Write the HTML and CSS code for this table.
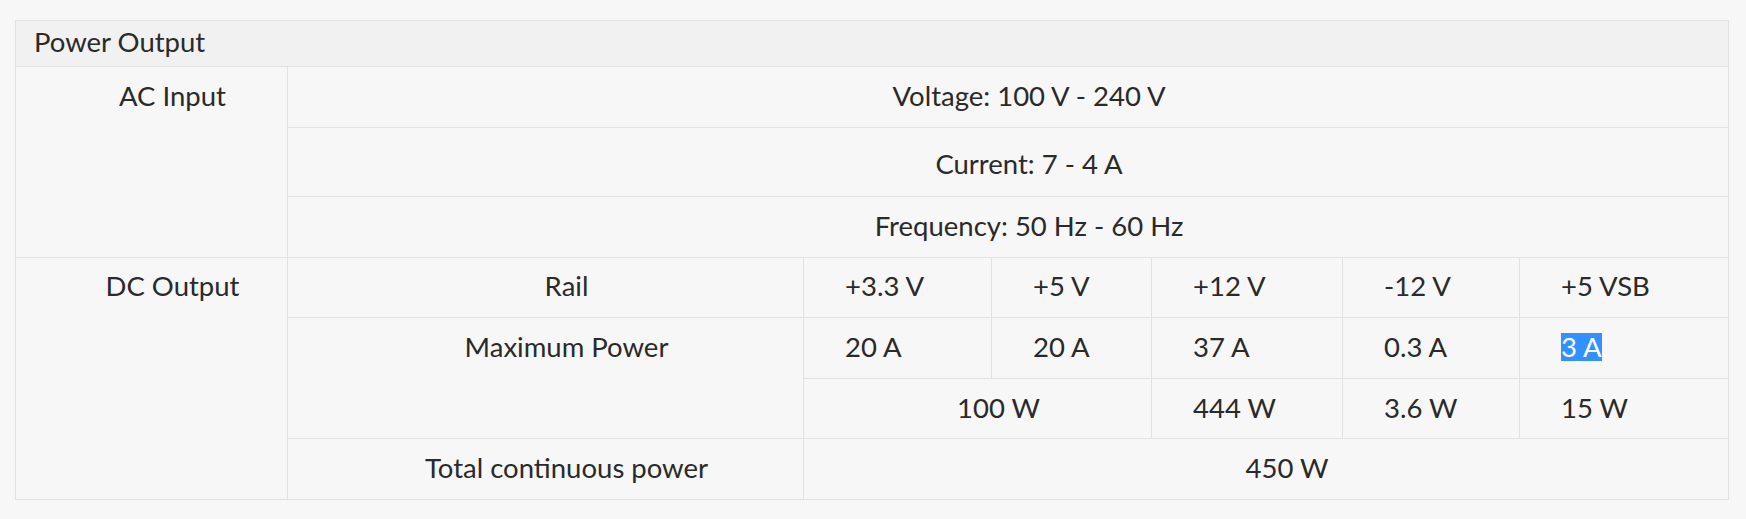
FILE: index.html
```html
<!DOCTYPE html>
<html lang="en">
<head>
<meta charset="utf-8">
<title>Power Output</title>
<link rel="stylesheet" href="styles.css">
</head>
<body>
<div class="page">
  <table class="spec">
    <colgroup>
      <col class="c-label">
      <col class="c-sub">
      <col class="c-33">
      <col class="c-5">
      <col class="c-12">
      <col class="c-m12">
      <col class="c-vsb">
    </colgroup>
    <thead>
      <tr class="head-row">
        <th colspan="7">Power Output</th>
      </tr>
    </thead>
    <tbody>
      <tr>
        <td rowspan="3" class="top">AC Input</td>
        <td colspan="6">Voltage: 100 V - 240 V</td>
      </tr>
      <tr class="current-row">
        <td colspan="6">Current: 7 - 4 A</td>
      </tr>
      <tr>
        <td colspan="6">Frequency: 50 Hz - 60 Hz</td>
      </tr>
      <tr class="rail-row">
        <td rowspan="4" class="top">DC Output</td>
        <td>Rail</td>
        <td class="val">+3.3 V</td>
        <td class="val">+5 V</td>
        <td class="val">+12 V</td>
        <td class="val">-12 V</td>
        <td class="val">+5 VSB</td>
      </tr>
      <tr>
        <td rowspan="2" class="top">Maximum Power</td>
        <td class="val">20 A</td>
        <td class="val">20 A</td>
        <td class="val">37 A</td>
        <td class="val">0.3 A</td>
        <td class="val"><span class="sel">3 A</span></td>
      </tr>
      <tr class="watt-row">
        <td colspan="2">100 W</td>
        <td class="val">444 W</td>
        <td class="val">3.6 W</td>
        <td class="val">15 W</td>
      </tr>
      <tr>
        <td>Total continuous power</td>
        <td colspan="5">450 W</td>
      </tr>
    </tbody>
  </table>
</div>
</body>
</html>
```
FILE: styles.css
```css
html, body {
  margin: 0;
  padding: 0;
  background: #f7f7f7;
}

body {
  font-family: "Lato", "Open Sans", sans-serif;
  font-size: 27.5px;
  color: #2a2a2a;
}

.page {
  padding: 20px 0 0 15px;
}

.spec {
  border-collapse: collapse;
  table-layout: fixed;
  width: 1713px;
  background: #f7f7f7;
}

.c-label { width: 272px; }
.c-sub { width: 516px; }
.c-33 { width: 188px; }
.c-5 { width: 160px; }
.c-12 { width: 191px; }
.c-m12 { width: 177px; }
.c-vsb { width: 209px; }

.spec th,
.spec td {
  border: 1px solid #e2e2e2;
  line-height: 32px;
  padding: 13px 0 15px 42px;
  text-align: center;
  vertical-align: middle;
  font-weight: normal;
}

.head-row th {
  background: #f1f1f1;
  text-align: left;
  padding: 5px 0 8px 18px;
}

.spec td.top {
  vertical-align: top;
}

.spec td.val {
  text-align: left;
  padding-left: 41px;
}

.current-row td {
  padding-top: 20px;
  padding-bottom: 16px;
}

.rail-row td {
  padding-top: 12px;
  padding-bottom: 15px;
}

.watt-row td {
  padding-top: 13px;
  padding-bottom: 14px;
}

.sel {
  display: inline-block;
  line-height: 28px;
  background: #3390ff;
  color: #ffffff;
}
```
